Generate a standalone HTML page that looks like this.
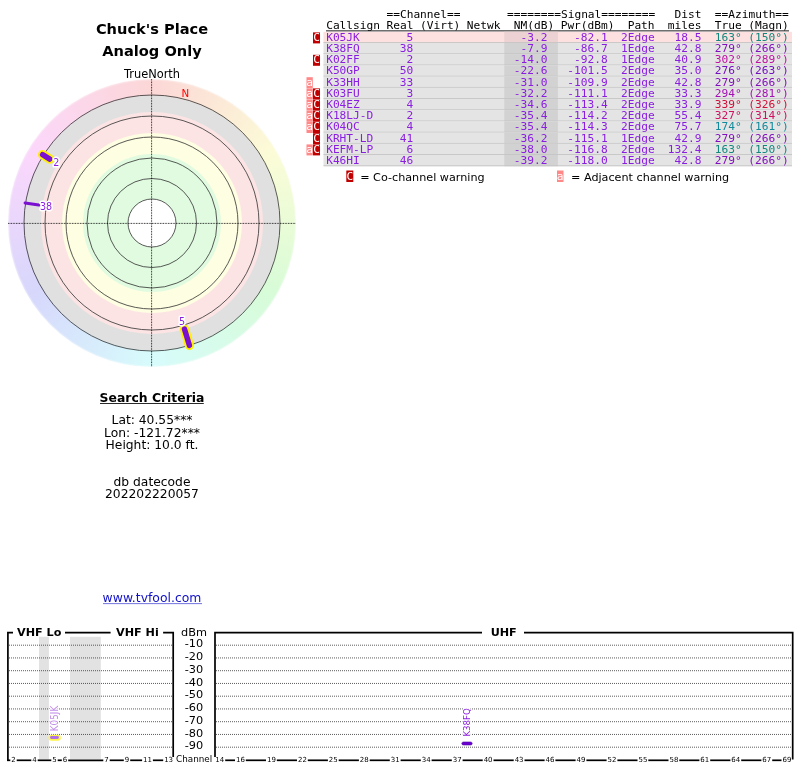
<!DOCTYPE html>
<html><head><meta charset="utf-8"><title>TV Fool</title>
<style>
html,body{margin:0;padding:0;background:#fff;}
body{width:800px;height:768px;position:relative;overflow:hidden;font-family:"DejaVu Sans","Liberation Sans",sans-serif;}
#hue{position:absolute;left:8px;top:79px;width:288px;height:288px;border-radius:50%;
background:conic-gradient(from 0deg,hsl(0,85%,91.5%),hsl(30,85%,91.5%),hsl(60,85%,91.5%),hsl(90,85%,91.5%),hsl(120,85%,91.5%),hsl(150,85%,91.5%),hsl(180,85%,91.5%),hsl(210,85%,91.5%),hsl(240,85%,91.5%),hsl(270,85%,91.5%),hsl(300,85%,91.5%),hsl(330,85%,91.5%),hsl(360,85%,91.5%));}
svg{position:absolute;left:0;top:0;will-change:transform;}
text{font-family:"DejaVu Sans","Liberation Sans",sans-serif;}
.m{font-family:"DejaVu Sans Mono","Liberation Mono",monospace;font-size:11.2px;}
.b{font-weight:bold;}
a{fill:#0000cc;}
</style></head><body>
<div id="hue"></div>
<svg width="800" height="768" viewBox="0 0 800 768">

<defs><filter id="bl" x="-0.05" y="-0.05" width="1.1" height="1.1"><feGaussianBlur stdDeviation="0.7"/></filter><radialGradient id="fade" cx="152" cy="223" r="144" gradientUnits="userSpaceOnUse"><stop offset="0.985" stop-color="#fff" stop-opacity="0"/><stop offset="1" stop-color="#fff" stop-opacity="0.5"/></radialGradient></defs>
<circle cx="152" cy="223" r="144.5" fill="url(#fade)"/>
<g filter="url(#bl)">
<circle cx="152" cy="223" r="127.5" fill="#e0e0e0"/>
<circle cx="152" cy="223" r="111" fill="#fde4e4"/>
<circle cx="152" cy="223" r="90" fill="#fefee2"/>
<circle cx="152" cy="223" r="69" fill="#e0fbe0"/>
<circle cx="152" cy="223" r="24" fill="#ffffff"/>
</g>
<circle cx="152" cy="223" r="24" fill="none" stroke="#303030" stroke-width="0.8"/>
<circle cx="152" cy="223" r="44.5" fill="none" stroke="#303030" stroke-width="0.8"/>
<circle cx="152" cy="223" r="65" fill="none" stroke="#303030" stroke-width="0.8"/>
<circle cx="152" cy="223" r="86" fill="none" stroke="#303030" stroke-width="0.8"/>
<circle cx="152" cy="223" r="107" fill="none" stroke="#303030" stroke-width="0.8"/>
<circle cx="152" cy="223" r="128" fill="none" stroke="#303030" stroke-width="0.8"/>
<line x1="8" y1="223.4" x2="296" y2="223.4" stroke="#000" stroke-width="0.9" stroke-dasharray="0.8,0.8"/>
<line x1="151.6" y1="79" x2="151.6" y2="367" stroke="#000" stroke-width="0.9" stroke-dasharray="0.8,0.8"/>
<text x="181.5" y="96.7" font-size="10.3" fill="#f00">N</text>
<line x1="184.5" y1="329.1" x2="189.4" y2="345.4" stroke="#fff000" stroke-width="9.2" stroke-linecap="round"/>
<line x1="184.5" y1="329.1" x2="189.4" y2="345.4" stroke="#7a10d0" stroke-width="5.4" stroke-linecap="round"/>
<line x1="49.8" y1="159.1" x2="42.6" y2="154.6" stroke="#fff000" stroke-width="9.2" stroke-linecap="round"/>
<line x1="49.8" y1="159.1" x2="42.6" y2="154.6" stroke="#7a10d0" stroke-width="5.4" stroke-linecap="round"/>
<line x1="38.9" y1="205.1" x2="25.1" y2="202.9" stroke="#7a10d0" stroke-width="3" stroke-linecap="round"/>
<text x="179" y="325" font-size="9.6" fill="#8a1ee0" stroke="#fff" stroke-width="3" stroke-linejoin="round" paint-order="stroke">5</text>
<text x="53.2" y="166" font-size="9.6" fill="#8a1ee0" stroke="#fff" stroke-width="3" stroke-linejoin="round" paint-order="stroke">2</text>
<text x="40" y="210.3" font-size="9.6" fill="#8a1ee0" stroke="#fff" stroke-width="3" stroke-linejoin="round" paint-order="stroke">38</text>
<text x="152" y="34" font-size="14.6" class="b" text-anchor="middle">Chuck's Place</text>
<text x="152" y="55.6" font-size="14.6" class="b" text-anchor="middle">Analog Only</text>
<text x="152" y="77.6" font-size="11.4" text-anchor="middle">TrueNorth</text>
<text x="152" y="402" font-size="12.4" class="b" text-anchor="middle">Search Criteria</text><rect x="100" y="403.1" width="103.8" height="0.9" fill="#111"/>
<text x="152" y="423.7" font-size="12.3" text-anchor="middle">Lat: 40.55***</text>
<text x="152" y="437" font-size="12.3" text-anchor="middle">Lon: -121.72***</text>
<text x="152" y="448.8" font-size="12.3" text-anchor="middle">Height: 10.0 ft.</text>
<text x="152" y="485.7" font-size="12.3" text-anchor="middle">db datecode</text>
<text x="152" y="497.5" font-size="12.3" text-anchor="middle">202202220057</text>
<text x="152" y="602" font-size="12.4" text-anchor="middle" fill="#1010c8">www.tvfool.com</text><rect x="103" y="603.2" width="99" height="0.9" fill="#1010c8" opacity="0.65"/>
<text class="m" x="386.45" y="17.90" fill="#000">==Channel==</text>
<text class="m" x="507.05" y="17.90" fill="#000">========Signal========</text>
<text class="m" x="674.55" y="17.90" fill="#000">Dist</text>
<text class="m" x="714.75" y="17.90" fill="#000">==Azimuth==</text>
<text class="m" x="326.15" y="28.75" fill="#000">Callsign</text>
<text class="m" x="386.45" y="28.75" fill="#000">Real</text>
<text class="m" x="419.95" y="28.75" fill="#000">(Virt)</text>
<text class="m" x="466.85" y="28.75" fill="#000">Netwk</text>
<text class="m" x="513.75" y="28.75" fill="#000">NM(dB)</text>
<text class="m" x="560.65" y="28.75" fill="#000">Pwr(dBm)</text>
<text class="m" x="627.65" y="28.75" fill="#000">Path</text>
<text class="m" x="667.85" y="28.75" fill="#000">miles</text>
<text class="m" x="714.75" y="28.75" fill="#000">True</text>
<text class="m" x="748.25" y="28.75" fill="#000">(Magn)</text>
<rect x="326" y="30.4" width="463" height="1" fill="#111"/>
<rect x="323.5" y="31.80" width="468.5" height="11.20" fill="#fde0e0"/>
<rect x="504.3" y="31.80" width="53.6" height="11.20" fill="#ecd2d2"/>
<rect x="323.5" y="42.15" width="468.5" height="0.9" fill="#c4c4c4"/>
<rect x="313" y="32.40" width="7" height="11" fill="#c00000"/>
<text class="m" x="313.2" y="40.75" fill="#fff">C</text>
<text class="m" x="326.15" y="40.75" fill="#8a1ee0">K05JK</text>
<text class="m" x="406.55" y="40.75" fill="#8a1ee0">5</text>
<text class="m" x="520.45" y="40.75" fill="#8a1ee0">-3.2</text>
<text class="m" x="574.05" y="40.75" fill="#8a1ee0">-82.1</text>
<text class="m" x="620.95" y="40.75" fill="#8a1ee0">2Edge</text>
<text class="m" x="674.55" y="40.75" fill="#8a1ee0">18.5</text>
<text class="m" x="714.75" y="40.75" fill="#10887e">163°</text>
<text class="m" x="748.25" y="40.75" fill="#10887e">(150°)</text>
<rect x="323.5" y="43.00" width="468.5" height="11.20" fill="#e4e4e4"/>
<rect x="504.3" y="43.00" width="53.6" height="11.20" fill="#d2d2d2"/>
<rect x="323.5" y="53.35" width="468.5" height="0.9" fill="#c4c4c4"/>
<text class="m" x="326.15" y="51.95" fill="#8a1ee0">K38FQ</text>
<text class="m" x="399.85" y="51.95" fill="#8a1ee0">38</text>
<text class="m" x="520.45" y="51.95" fill="#8a1ee0">-7.9</text>
<text class="m" x="574.05" y="51.95" fill="#8a1ee0">-86.7</text>
<text class="m" x="620.95" y="51.95" fill="#8a1ee0">1Edge</text>
<text class="m" x="674.55" y="51.95" fill="#8a1ee0">42.8</text>
<text class="m" x="714.75" y="51.95" fill="#8210bc">279°</text>
<text class="m" x="748.25" y="51.95" fill="#8210bc">(266°)</text>
<rect x="323.5" y="54.20" width="468.5" height="11.20" fill="#e4e4e4"/>
<rect x="504.3" y="54.20" width="53.6" height="11.20" fill="#d2d2d2"/>
<rect x="323.5" y="64.55" width="468.5" height="0.9" fill="#c4c4c4"/>
<rect x="313" y="54.80" width="7" height="11" fill="#c00000"/>
<text class="m" x="313.2" y="63.15" fill="#fff">C</text>
<text class="m" x="326.15" y="63.15" fill="#8a1ee0">K02FF</text>
<text class="m" x="406.55" y="63.15" fill="#8a1ee0">2</text>
<text class="m" x="513.75" y="63.15" fill="#8a1ee0">-14.0</text>
<text class="m" x="574.05" y="63.15" fill="#8a1ee0">-92.8</text>
<text class="m" x="620.95" y="63.15" fill="#8a1ee0">1Edge</text>
<text class="m" x="674.55" y="63.15" fill="#8a1ee0">40.9</text>
<text class="m" x="714.75" y="63.15" fill="#c010a4">302°</text>
<text class="m" x="748.25" y="63.15" fill="#c010a4">(289°)</text>
<rect x="323.5" y="65.40" width="468.5" height="11.20" fill="#e4e4e4"/>
<rect x="504.3" y="65.40" width="53.6" height="11.20" fill="#d2d2d2"/>
<rect x="323.5" y="75.75" width="468.5" height="0.9" fill="#c4c4c4"/>
<text class="m" x="326.15" y="74.35" fill="#8a1ee0">K50GP</text>
<text class="m" x="399.85" y="74.35" fill="#8a1ee0">50</text>
<text class="m" x="513.75" y="74.35" fill="#8a1ee0">-22.6</text>
<text class="m" x="567.35" y="74.35" fill="#8a1ee0">-101.5</text>
<text class="m" x="620.95" y="74.35" fill="#8a1ee0">2Edge</text>
<text class="m" x="674.55" y="74.35" fill="#8a1ee0">35.0</text>
<text class="m" x="714.75" y="74.35" fill="#7410c0">276°</text>
<text class="m" x="748.25" y="74.35" fill="#7410c0">(263°)</text>
<rect x="323.5" y="76.60" width="468.5" height="11.20" fill="#e4e4e4"/>
<rect x="504.3" y="76.60" width="53.6" height="11.20" fill="#d2d2d2"/>
<rect x="323.5" y="86.95" width="468.5" height="0.9" fill="#c4c4c4"/>
<rect x="306.5" y="77.20" width="6.3" height="11" fill="#f88"/>
<text class="m" x="306.3" y="85.55" fill="#fff">a</text>
<text class="m" x="326.15" y="85.55" fill="#8a1ee0">K33HH</text>
<text class="m" x="399.85" y="85.55" fill="#8a1ee0">33</text>
<text class="m" x="513.75" y="85.55" fill="#8a1ee0">-31.0</text>
<text class="m" x="567.35" y="85.55" fill="#8a1ee0">-109.9</text>
<text class="m" x="620.95" y="85.55" fill="#8a1ee0">2Edge</text>
<text class="m" x="674.55" y="85.55" fill="#8a1ee0">42.8</text>
<text class="m" x="714.75" y="85.55" fill="#8210bc">279°</text>
<text class="m" x="748.25" y="85.55" fill="#8210bc">(266°)</text>
<rect x="323.5" y="87.80" width="468.5" height="11.20" fill="#e4e4e4"/>
<rect x="504.3" y="87.80" width="53.6" height="11.20" fill="#d2d2d2"/>
<rect x="323.5" y="98.15" width="468.5" height="0.9" fill="#c4c4c4"/>
<rect x="313" y="88.40" width="7" height="11" fill="#c00000"/>
<text class="m" x="313.2" y="96.75" fill="#fff">C</text>
<rect x="306.5" y="88.40" width="6.3" height="11" fill="#f88"/>
<text class="m" x="306.3" y="96.75" fill="#fff">a</text>
<text class="m" x="326.15" y="96.75" fill="#8a1ee0">K03FU</text>
<text class="m" x="406.55" y="96.75" fill="#8a1ee0">3</text>
<text class="m" x="513.75" y="96.75" fill="#8a1ee0">-32.2</text>
<text class="m" x="567.35" y="96.75" fill="#8a1ee0">-111.1</text>
<text class="m" x="620.95" y="96.75" fill="#8a1ee0">2Edge</text>
<text class="m" x="674.55" y="96.75" fill="#8a1ee0">33.3</text>
<text class="m" x="714.75" y="96.75" fill="#a410b6">294°</text>
<text class="m" x="748.25" y="96.75" fill="#a410b6">(281°)</text>
<rect x="323.5" y="99.00" width="468.5" height="11.20" fill="#e4e4e4"/>
<rect x="504.3" y="99.00" width="53.6" height="11.20" fill="#d2d2d2"/>
<rect x="323.5" y="109.35" width="468.5" height="0.9" fill="#c4c4c4"/>
<rect x="313" y="99.60" width="7" height="11" fill="#c00000"/>
<text class="m" x="313.2" y="107.95" fill="#fff">C</text>
<rect x="306.5" y="99.60" width="6.3" height="11" fill="#f88"/>
<text class="m" x="306.3" y="107.95" fill="#fff">a</text>
<text class="m" x="326.15" y="107.95" fill="#8a1ee0">K04EZ</text>
<text class="m" x="406.55" y="107.95" fill="#8a1ee0">4</text>
<text class="m" x="513.75" y="107.95" fill="#8a1ee0">-34.6</text>
<text class="m" x="567.35" y="107.95" fill="#8a1ee0">-113.4</text>
<text class="m" x="620.95" y="107.95" fill="#8a1ee0">2Edge</text>
<text class="m" x="674.55" y="107.95" fill="#8a1ee0">33.9</text>
<text class="m" x="714.75" y="107.95" fill="#d01038">339°</text>
<text class="m" x="748.25" y="107.95" fill="#d01038">(326°)</text>
<rect x="323.5" y="110.20" width="468.5" height="11.20" fill="#e4e4e4"/>
<rect x="504.3" y="110.20" width="53.6" height="11.20" fill="#d2d2d2"/>
<rect x="323.5" y="120.55" width="468.5" height="0.9" fill="#c4c4c4"/>
<rect x="313" y="110.80" width="7" height="11" fill="#c00000"/>
<text class="m" x="313.2" y="119.15" fill="#fff">C</text>
<rect x="306.5" y="110.80" width="6.3" height="11" fill="#f88"/>
<text class="m" x="306.3" y="119.15" fill="#fff">a</text>
<text class="m" x="326.15" y="119.15" fill="#8a1ee0">K18LJ-D</text>
<text class="m" x="406.55" y="119.15" fill="#8a1ee0">2</text>
<text class="m" x="513.75" y="119.15" fill="#8a1ee0">-35.4</text>
<text class="m" x="567.35" y="119.15" fill="#8a1ee0">-114.2</text>
<text class="m" x="620.95" y="119.15" fill="#8a1ee0">2Edge</text>
<text class="m" x="674.55" y="119.15" fill="#8a1ee0">55.4</text>
<text class="m" x="714.75" y="119.15" fill="#d01060">327°</text>
<text class="m" x="748.25" y="119.15" fill="#d01060">(314°)</text>
<rect x="323.5" y="121.40" width="468.5" height="11.20" fill="#e4e4e4"/>
<rect x="504.3" y="121.40" width="53.6" height="11.20" fill="#d2d2d2"/>
<rect x="323.5" y="131.75" width="468.5" height="0.9" fill="#c4c4c4"/>
<rect x="313" y="122.00" width="7" height="11" fill="#c00000"/>
<text class="m" x="313.2" y="130.35" fill="#fff">C</text>
<rect x="306.5" y="122.00" width="6.3" height="11" fill="#f88"/>
<text class="m" x="306.3" y="130.35" fill="#fff">a</text>
<text class="m" x="326.15" y="130.35" fill="#8a1ee0">K04QC</text>
<text class="m" x="406.55" y="130.35" fill="#8a1ee0">4</text>
<text class="m" x="513.75" y="130.35" fill="#8a1ee0">-35.4</text>
<text class="m" x="567.35" y="130.35" fill="#8a1ee0">-114.3</text>
<text class="m" x="620.95" y="130.35" fill="#8a1ee0">2Edge</text>
<text class="m" x="674.55" y="130.35" fill="#8a1ee0">75.7</text>
<text class="m" x="714.75" y="130.35" fill="#108a9c">174°</text>
<text class="m" x="748.25" y="130.35" fill="#108a9c">(161°)</text>
<rect x="323.5" y="132.60" width="468.5" height="11.20" fill="#e4e4e4"/>
<rect x="504.3" y="132.60" width="53.6" height="11.20" fill="#d2d2d2"/>
<rect x="323.5" y="142.95" width="468.5" height="0.9" fill="#c4c4c4"/>
<rect x="313" y="133.20" width="7" height="11" fill="#c00000"/>
<text class="m" x="313.2" y="141.55" fill="#fff">C</text>
<text class="m" x="326.15" y="141.55" fill="#8a1ee0">KRHT-LD</text>
<text class="m" x="399.85" y="141.55" fill="#8a1ee0">41</text>
<text class="m" x="513.75" y="141.55" fill="#8a1ee0">-36.2</text>
<text class="m" x="567.35" y="141.55" fill="#8a1ee0">-115.1</text>
<text class="m" x="620.95" y="141.55" fill="#8a1ee0">1Edge</text>
<text class="m" x="674.55" y="141.55" fill="#8a1ee0">42.9</text>
<text class="m" x="714.75" y="141.55" fill="#8210bc">279°</text>
<text class="m" x="748.25" y="141.55" fill="#8210bc">(266°)</text>
<rect x="323.5" y="143.80" width="468.5" height="11.20" fill="#e4e4e4"/>
<rect x="504.3" y="143.80" width="53.6" height="11.20" fill="#d2d2d2"/>
<rect x="323.5" y="154.15" width="468.5" height="0.9" fill="#c4c4c4"/>
<rect x="313" y="144.40" width="7" height="11" fill="#c00000"/>
<text class="m" x="313.2" y="152.75" fill="#fff">C</text>
<rect x="306.5" y="144.40" width="6.3" height="11" fill="#f88"/>
<text class="m" x="306.3" y="152.75" fill="#fff">a</text>
<text class="m" x="326.15" y="152.75" fill="#8a1ee0">KEFM-LP</text>
<text class="m" x="406.55" y="152.75" fill="#8a1ee0">6</text>
<text class="m" x="513.75" y="152.75" fill="#8a1ee0">-38.0</text>
<text class="m" x="567.35" y="152.75" fill="#8a1ee0">-116.8</text>
<text class="m" x="620.95" y="152.75" fill="#8a1ee0">2Edge</text>
<text class="m" x="667.85" y="152.75" fill="#8a1ee0">132.4</text>
<text class="m" x="714.75" y="152.75" fill="#10887e">163°</text>
<text class="m" x="748.25" y="152.75" fill="#10887e">(150°)</text>
<rect x="323.5" y="155.00" width="468.5" height="11.20" fill="#e4e4e4"/>
<rect x="504.3" y="155.00" width="53.6" height="11.20" fill="#d2d2d2"/>
<rect x="323.5" y="165.35" width="468.5" height="0.9" fill="#c4c4c4"/>
<text class="m" x="326.15" y="163.95" fill="#8a1ee0">K46HI</text>
<text class="m" x="399.85" y="163.95" fill="#8a1ee0">46</text>
<text class="m" x="513.75" y="163.95" fill="#8a1ee0">-39.2</text>
<text class="m" x="567.35" y="163.95" fill="#8a1ee0">-118.0</text>
<text class="m" x="620.95" y="163.95" fill="#8a1ee0">1Edge</text>
<text class="m" x="674.55" y="163.95" fill="#8a1ee0">42.8</text>
<text class="m" x="714.75" y="163.95" fill="#8210bc">279°</text>
<text class="m" x="748.25" y="163.95" fill="#8210bc">(266°)</text>
<rect x="346.3" y="170.5" width="7" height="11.5" fill="#c00000"/><text class="m" x="346.5" y="180.3" fill="#fff">C</text>
<text x="360.2" y="180.5" font-size="11.2">= Co-channel warning</text>
<rect x="557" y="170.5" width="6.5" height="11.5" fill="#f88"/><text class="m" x="556.8" y="180.3" fill="#fff">a</text>
<text x="571" y="180.5" font-size="11.2">= Adjacent channel warning</text>
<rect x="39" y="636.8" width="9.9" height="122.4" fill="#e2e2e2"/>
<rect x="70" y="636.8" width="30.8" height="122.4" fill="#e2e2e2"/>
<line x1="9" y1="645.20" x2="172.4" y2="645.20" stroke="#333" stroke-width="0.8" stroke-dasharray="1,1"/>
<line x1="216" y1="645.20" x2="792" y2="645.20" stroke="#333" stroke-width="0.8" stroke-dasharray="1,1"/>
<text x="203.2" y="647.30" font-size="11.3" text-anchor="end">-10</text>
<line x1="9" y1="657.95" x2="172.4" y2="657.95" stroke="#333" stroke-width="0.8" stroke-dasharray="1,1"/>
<line x1="216" y1="657.95" x2="792" y2="657.95" stroke="#333" stroke-width="0.8" stroke-dasharray="1,1"/>
<text x="203.2" y="660.05" font-size="11.3" text-anchor="end">-20</text>
<line x1="9" y1="670.70" x2="172.4" y2="670.70" stroke="#333" stroke-width="0.8" stroke-dasharray="1,1"/>
<line x1="216" y1="670.70" x2="792" y2="670.70" stroke="#333" stroke-width="0.8" stroke-dasharray="1,1"/>
<text x="203.2" y="672.80" font-size="11.3" text-anchor="end">-30</text>
<line x1="9" y1="683.45" x2="172.4" y2="683.45" stroke="#333" stroke-width="0.8" stroke-dasharray="1,1"/>
<line x1="216" y1="683.45" x2="792" y2="683.45" stroke="#333" stroke-width="0.8" stroke-dasharray="1,1"/>
<text x="203.2" y="685.55" font-size="11.3" text-anchor="end">-40</text>
<line x1="9" y1="696.20" x2="172.4" y2="696.20" stroke="#333" stroke-width="0.8" stroke-dasharray="1,1"/>
<line x1="216" y1="696.20" x2="792" y2="696.20" stroke="#333" stroke-width="0.8" stroke-dasharray="1,1"/>
<text x="203.2" y="698.30" font-size="11.3" text-anchor="end">-50</text>
<line x1="9" y1="708.95" x2="172.4" y2="708.95" stroke="#333" stroke-width="0.8" stroke-dasharray="1,1"/>
<line x1="216" y1="708.95" x2="792" y2="708.95" stroke="#333" stroke-width="0.8" stroke-dasharray="1,1"/>
<text x="203.2" y="711.05" font-size="11.3" text-anchor="end">-60</text>
<line x1="9" y1="721.70" x2="172.4" y2="721.70" stroke="#333" stroke-width="0.8" stroke-dasharray="1,1"/>
<line x1="216" y1="721.70" x2="792" y2="721.70" stroke="#333" stroke-width="0.8" stroke-dasharray="1,1"/>
<text x="203.2" y="723.80" font-size="11.3" text-anchor="end">-70</text>
<line x1="9" y1="734.45" x2="172.4" y2="734.45" stroke="#333" stroke-width="0.8" stroke-dasharray="1,1"/>
<line x1="216" y1="734.45" x2="792" y2="734.45" stroke="#333" stroke-width="0.8" stroke-dasharray="1,1"/>
<text x="203.2" y="736.55" font-size="11.3" text-anchor="end">-80</text>
<line x1="9" y1="747.20" x2="172.4" y2="747.20" stroke="#333" stroke-width="0.8" stroke-dasharray="1,1"/>
<line x1="216" y1="747.20" x2="792" y2="747.20" stroke="#333" stroke-width="0.8" stroke-dasharray="1,1"/>
<text x="203.2" y="749.30" font-size="11.3" text-anchor="end">-90</text>
<text x="181" y="635.6" font-size="11.3">dBm</text>
<text x="176.1" y="761.9" font-size="8.8">Channel</text>
<path d="M13 632.7H7.9V760.8" fill="none" stroke="#000" stroke-width="1.7"/>
<path d="M65 632.7H110.6M163.1 632.7H173.2V757" fill="none" stroke="#000" stroke-width="1.7"/>
<text x="17" y="635.9" font-size="11.2" class="b">VHF Lo</text>
<text x="116" y="635.9" font-size="11.2" class="b">VHF Hi</text>
<path d="M482 632.7H215V757" fill="none" stroke="#000" stroke-width="1.7"/>
<path d="M524 632.7H792.7V759.4" fill="none" stroke="#000" stroke-width="1.7"/>
<text x="503.7" y="635.9" font-size="11.2" class="b" text-anchor="middle">UHF</text>
<text x="13.5" y="762.3" font-size="7" text-anchor="middle">2</text>
<text x="34.5" y="762.3" font-size="7" text-anchor="middle">4</text>
<text x="54.5" y="762.3" font-size="7" text-anchor="middle">5</text>
<text x="65.0" y="762.3" font-size="7" text-anchor="middle">6</text>
<text x="106.5" y="762.3" font-size="7" text-anchor="middle">7</text>
<text x="127.0" y="762.3" font-size="7" text-anchor="middle">9</text>
<text x="147.5" y="762.3" font-size="7" text-anchor="middle">11</text>
<text x="168.6" y="762.3" font-size="7" text-anchor="middle">13</text>
<line x1="7.0" y1="760.3" x2="10.3" y2="760.3" stroke="#000" stroke-width="1.7"/>
<line x1="16.7" y1="760.3" x2="31.3" y2="760.3" stroke="#000" stroke-width="1.7"/>
<line x1="37.7" y1="760.3" x2="51.3" y2="760.3" stroke="#000" stroke-width="1.7"/>
<line x1="57.7" y1="760.3" x2="61.8" y2="760.3" stroke="#000" stroke-width="1.7"/>
<line x1="68.2" y1="760.3" x2="103.3" y2="760.3" stroke="#000" stroke-width="1.7"/>
<line x1="109.7" y1="760.3" x2="123.8" y2="760.3" stroke="#000" stroke-width="1.7"/>
<line x1="130.2" y1="760.3" x2="142.1" y2="760.3" stroke="#000" stroke-width="1.7"/>
<line x1="152.9" y1="760.3" x2="163.2" y2="760.3" stroke="#000" stroke-width="1.7"/>
<text x="219.8" y="762.3" font-size="7" text-anchor="middle">14</text>
<text x="240.4" y="762.3" font-size="7" text-anchor="middle">16</text>
<text x="271.4" y="762.3" font-size="7" text-anchor="middle">19</text>
<text x="302.4" y="762.3" font-size="7" text-anchor="middle">22</text>
<text x="333.3" y="762.3" font-size="7" text-anchor="middle">25</text>
<text x="364.3" y="762.3" font-size="7" text-anchor="middle">28</text>
<text x="395.2" y="762.3" font-size="7" text-anchor="middle">31</text>
<text x="426.2" y="762.3" font-size="7" text-anchor="middle">34</text>
<text x="457.2" y="762.3" font-size="7" text-anchor="middle">37</text>
<text x="488.1" y="762.3" font-size="7" text-anchor="middle">40</text>
<text x="519.1" y="762.3" font-size="7" text-anchor="middle">43</text>
<text x="550.0" y="762.3" font-size="7" text-anchor="middle">46</text>
<text x="581.0" y="762.3" font-size="7" text-anchor="middle">49</text>
<text x="612.0" y="762.3" font-size="7" text-anchor="middle">52</text>
<text x="642.9" y="762.3" font-size="7" text-anchor="middle">55</text>
<text x="673.9" y="762.3" font-size="7" text-anchor="middle">58</text>
<text x="704.8" y="762.3" font-size="7" text-anchor="middle">61</text>
<text x="735.8" y="762.3" font-size="7" text-anchor="middle">64</text>
<text x="766.8" y="762.3" font-size="7" text-anchor="middle">67</text>
<text x="786.9" y="762.3" font-size="7" text-anchor="middle">69</text>
<line x1="225.2" y1="760.3" x2="235.0" y2="760.3" stroke="#000" stroke-width="1.7"/>
<line x1="245.8" y1="760.3" x2="266.0" y2="760.3" stroke="#000" stroke-width="1.7"/>
<line x1="276.8" y1="760.3" x2="297.0" y2="760.3" stroke="#000" stroke-width="1.7"/>
<line x1="307.8" y1="760.3" x2="327.9" y2="760.3" stroke="#000" stroke-width="1.7"/>
<line x1="338.7" y1="760.3" x2="358.9" y2="760.3" stroke="#000" stroke-width="1.7"/>
<line x1="369.7" y1="760.3" x2="389.8" y2="760.3" stroke="#000" stroke-width="1.7"/>
<line x1="400.6" y1="760.3" x2="420.8" y2="760.3" stroke="#000" stroke-width="1.7"/>
<line x1="431.6" y1="760.3" x2="451.8" y2="760.3" stroke="#000" stroke-width="1.7"/>
<line x1="462.6" y1="760.3" x2="482.7" y2="760.3" stroke="#000" stroke-width="1.7"/>
<line x1="493.5" y1="760.3" x2="513.7" y2="760.3" stroke="#000" stroke-width="1.7"/>
<line x1="524.5" y1="760.3" x2="544.6" y2="760.3" stroke="#000" stroke-width="1.7"/>
<line x1="555.4" y1="760.3" x2="575.6" y2="760.3" stroke="#000" stroke-width="1.7"/>
<line x1="586.4" y1="760.3" x2="606.6" y2="760.3" stroke="#000" stroke-width="1.7"/>
<line x1="617.4" y1="760.3" x2="637.5" y2="760.3" stroke="#000" stroke-width="1.7"/>
<line x1="648.3" y1="760.3" x2="668.5" y2="760.3" stroke="#000" stroke-width="1.7"/>
<line x1="679.3" y1="760.3" x2="699.4" y2="760.3" stroke="#000" stroke-width="1.7"/>
<line x1="710.2" y1="760.3" x2="730.4" y2="760.3" stroke="#000" stroke-width="1.7"/>
<line x1="741.2" y1="760.3" x2="761.4" y2="760.3" stroke="#000" stroke-width="1.7"/>
<line x1="772.2" y1="760.3" x2="781.5" y2="760.3" stroke="#000" stroke-width="1.7"/>
<rect x="48.5" y="734.8" width="12.3" height="5.9" rx="2.9" fill="#fff44a"/><rect x="50" y="736.1" width="8.9" height="2.9" rx="1.45" fill="#b070e8"/>
<text transform="translate(58.1,731.2) rotate(-90) scale(0.92,1)" font-size="9.6" fill="#c08ee8" stroke="#fff" stroke-width="2" stroke-linejoin="round" paint-order="stroke">K05JK</text>
<rect x="461.8" y="741.9" width="10.4" height="3.2" rx="1.6" fill="#6a00d0" stroke="#4a0a9a" stroke-width="0.5"/>
<text transform="translate(470.2,736.6) rotate(-90) scale(0.9,1)" font-size="9.6" fill="#8a1ee0" stroke="#fff" stroke-width="2" stroke-linejoin="round" paint-order="stroke">K38FQ</text>
</svg></body></html>
